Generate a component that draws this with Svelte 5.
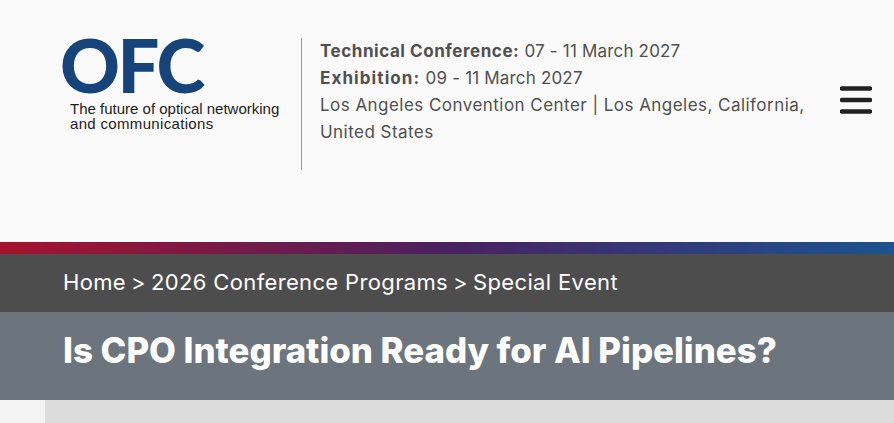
<script>
	const crumbs = ['Home', '2026 Conference Programs', 'Special Event'];
</script>

<header class="top">
	<div class="logo">
		<div class="mark">OFC</div>
		<p class="tag">The future of optical networking<br /><span class="second">and communications</span></p>
	</div>
	<div class="info">
		<p><strong>Technical Conference:</strong> <span class="date">07 - 11 March 2027</span></p>
		<p><strong class="wide">Exhibition:</strong> <span class="date">09 - 11 March 2027</span></p>
		<p>Los Angeles Convention Center | Los Angeles, California, United States</p>
	</div>
	<button class="menu" aria-label="Menu">
		<svg width="32" height="30" viewBox="0 0 32 30">
			<path d="M2 3.5H30M2 15H30M2 26.5H30" stroke="#212121" stroke-width="4.6" stroke-linecap="round" />
		</svg>
	</button>
</header>

<div class="stripe"></div>

<nav class="crumbs">
	{#each crumbs as c, i}{#if i > 0}<span class="sep">{' > '}</span>{/if}{c}{/each}
</nav>

<div class="title">
	<h1>Is CPO Integration Ready for AI Pipelines?</h1>
</div>

<div class="below">
	<div class="gutter"></div>
	<div class="main"></div>
</div>

<style>
	:global(body) {
		margin: 0;
		background: #fafafa;
		overflow: hidden;
	}
	p {
		margin: 0;
	}
	.top {
		height: 242px;
		box-sizing: border-box;
		background: #fafafa;
		padding: 38px 0 0 63px;
		display: flex;
		align-items: flex-start;
	}
	.logo {
		width: 239px;
		flex: none;
		height: 132px;
		box-sizing: border-box;
		border-right: 1px solid #999;
	}
	.mark {
		font-family: "Lato", sans-serif;
		font-weight: 900;
		font-size: 74px;
		line-height: 54px;
		letter-spacing: -2.5px;
		margin-left: -3px;
		color: #17437b;
	}
	.tag {
		margin: 9px 0 0 7px;
		font-family: "Liberation Sans", sans-serif;
		font-size: 15px;
		line-height: 15px;
		color: #1c1c1c;
	}
	.second {
		letter-spacing: 0.33px;
	}
	.info {
		width: 500px;
		flex: none;
		padding-left: 18px;
		font-family: "Inter", sans-serif;
		font-size: 17px;
		letter-spacing: 0.46px;
		line-height: 27px;
		color: #505050;
	}
	.info strong {
		font-weight: 700;
		letter-spacing: 0.55px;
	}
	.info strong.wide {
		letter-spacing: 1.1px;
	}
	.date {
		letter-spacing: 0.18px;
	}
	.menu {
		margin: 47px 0 0 20px;
		padding: 0;
		border: 0;
		background: none;
		display: block;
		line-height: 0;
	}
	.stripe {
		height: 12px;
		background: linear-gradient(90deg, #a6122d, #4a2161 50%, #1c5390);
	}
	.crumbs {
		height: 58px;
		box-sizing: border-box;
		background: #4d4d4d;
		padding-left: 63px;
		font-family: "Inter", sans-serif;
		font-size: 22px;
		letter-spacing: 0.35px;
		line-height: 57px;
		color: #fff;
		white-space: pre;
	}
	.sep {
		margin: 0 -1.5px;
	}
	.title {
		height: 88px;
		box-sizing: border-box;
		background: #6c757d;
		padding-left: 63px;
	}
	h1 {
		margin: 0;
		font-family: "Inter", sans-serif;
		font-weight: 800;
		font-size: 34.8px;
		line-height: 77px;
		color: #fff;
	}
	.below {
		display: flex;
		height: 23px;
	}
	.gutter {
		width: 45px;
		background: #f3f3f3;
	}
	.main {
		flex: 1;
		background: #dcdcdc;
	}
</style>
